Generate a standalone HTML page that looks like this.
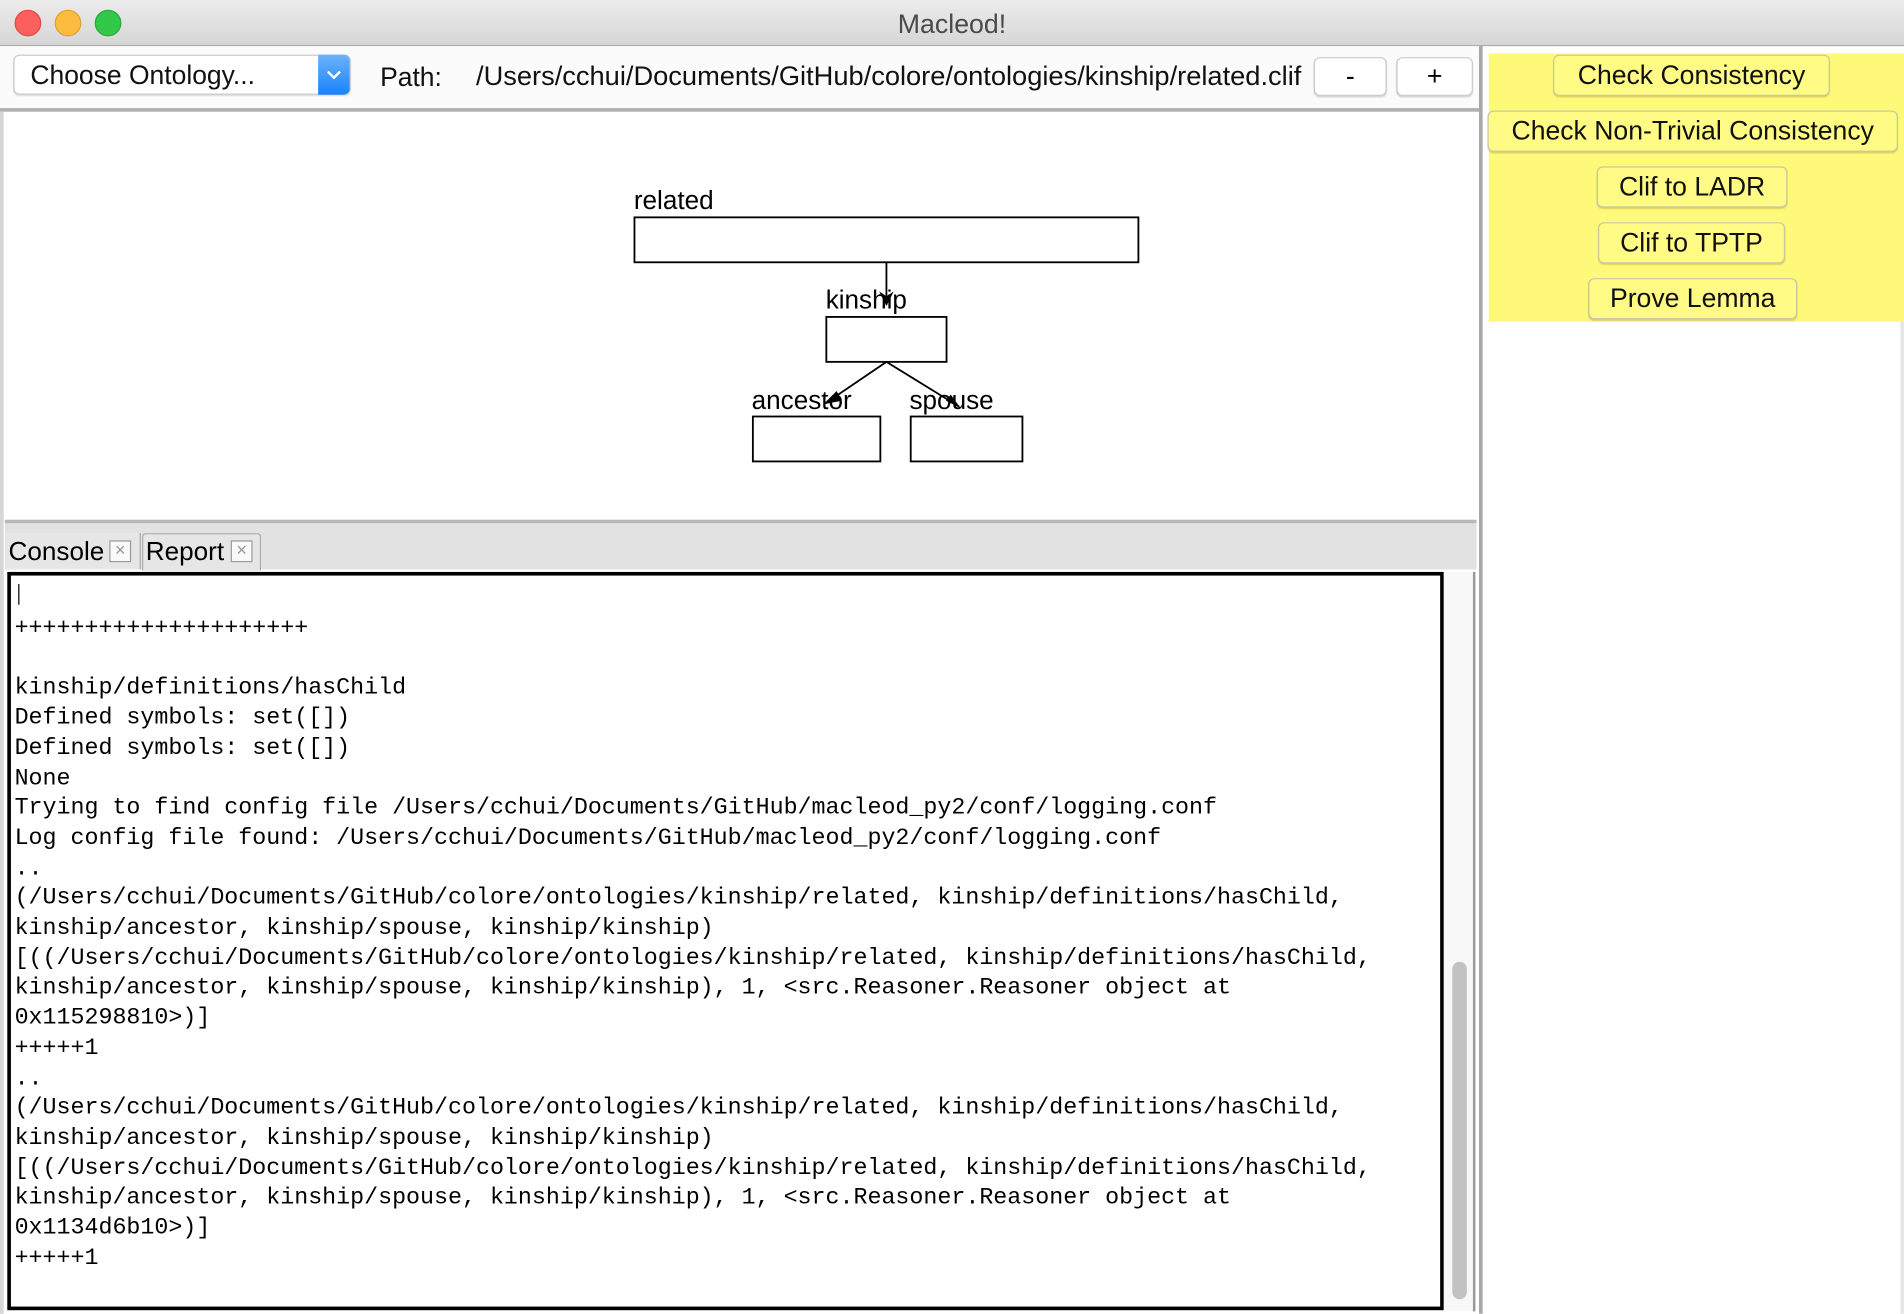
<!DOCTYPE html>
<html><head><meta charset="utf-8"><style>
html,body{margin:0;padding:0;width:1904px;height:1314px;overflow:hidden;background:#fff}
#w{position:absolute;left:0;top:0;width:1568px;height:1082px;transform:scale(1.21429);transform-origin:0 0;font-family:"Liberation Sans",sans-serif;background:#fff;overflow:hidden}
.a{position:absolute}
.btn{position:absolute;background:#fffb85;border:1px solid #c8c8a0;border-radius:5px;box-shadow:0 1px 1px rgba(0,0,0,.15);font-size:21.9px;text-align:center;line-height:32px;height:32px;color:#111;white-space:nowrap}
.wb{position:absolute;background:#fff;border:1px solid #ccc;border-radius:5px;box-shadow:0 1px 1px rgba(0,0,0,.15);font-size:22px;text-align:center;line-height:30px;height:30px}
pre{margin:0;font-family:"Liberation Mono",monospace;font-size:19.2px;line-height:24.7px;color:#000}
</style></head><body><div id="w">
<div class="a" style="left:0;top:0;width:1568px;height:37px;background:linear-gradient(#ececec,#d6d6d6);border-bottom:1px solid #aaa"></div>
<div class="a" style="left:12px;top:8px;width:22px;height:22px;border-radius:50%;background:#fc605c;border:1px solid #de4a45;box-sizing:border-box"></div>
<div class="a" style="left:45px;top:8px;width:22px;height:22px;border-radius:50%;background:#fdbc40;border:1px solid #de9f34;box-sizing:border-box"></div>
<div class="a" style="left:78px;top:8px;width:22px;height:22px;border-radius:50%;background:#34c84a;border:1px solid #27aa35;box-sizing:border-box"></div>
<div class="a" style="left:0;top:7px;width:1568px;text-align:center;font-size:22px;color:#4a4a4a">Macleod!</div>
<div class="a" style="left:0;top:38px;width:1218px;height:51px;background:#fbfbfb;border-bottom:3px solid #b0b0b0"></div>
<div class="a" style="left:11px;top:45px;width:276px;height:31px;border:1px solid #ccc;border-radius:5px;background:#fff;box-shadow:0 1px 1px rgba(0,0,0,.12)"></div>
<div class="a" style="left:25px;top:49px;font-size:21.8px;color:#111">Choose Ontology...</div>
<div class="a" style="left:262px;top:45px;width:26px;height:33px;border-radius:0 5px 5px 0;background:linear-gradient(#6cb3fa,#1a82fb)"><svg width="26" height="33"><path d="M8 14l5 5 5-5" stroke="#fff" stroke-width="2" fill="none"/></svg></div>
<div class="a" style="left:313px;top:51px;font-size:21.8px;color:#111">Path:</div>
<div class="a" style="left:392px;top:50px;font-size:22.45px;color:#111;white-space:nowrap">/Users/cchui/Documents/GitHub/colore/ontologies/kinship/related.clif</div>
<div class="wb" style="left:1082px;top:47px;width:58px">-</div>
<div class="wb" style="left:1150px;top:47px;width:61px">+</div>
<div class="a" style="left:1218px;top:38px;width:3px;height:1044px;background:#a8a8a8"></div>
<div class="a" style="left:1226px;top:44px;width:342px;height:221px;background:#fff97a"></div>
<div class="btn" style="left:1279px;top:45px;width:226px">Check Consistency</div>
<div class="btn" style="left:1225px;top:91px;width:336px">Check Non-Trivial Consistency</div>
<div class="btn" style="left:1315px;top:137px;width:155px">Clif to LADR</div>
<div class="btn" style="left:1316px;top:183px;width:152px">Clif to TPTP</div>
<div class="btn" style="left:1308px;top:229px;width:170px">Prove Lemma</div>
<div class="a" style="left:1565px;top:265px;width:3px;height:817px;background:#e6e6e6"></div>
<div class="a" style="left:0;top:92px;width:3px;height:990px;background:#d6d6d6"></div>
<svg class="a" style="left:0;top:90px" width="1218" height="340">
<g font-family="Liberation Sans" font-size="21.5" fill="#000">
<text x="522" y="82">related</text><text x="680" y="164">kinship</text><text x="619" y="247">ancestor</text><text x="749" y="247">spouse</text></g>
<g fill="none" stroke="#000" stroke-width="1.5">
<rect x="522.5" y="89" width="415" height="37"/><rect x="680.5" y="171" width="99" height="37"/><rect x="620" y="253" width="105" height="37"/><rect x="750" y="253" width="92" height="37"/>
<path d="M730 126V161M730 208L680 242M730 208L790 245"/></g>
<path d="M724 150L730 162L736 150L730 154Z M689 232L678 243L693 240Z M779 240L791 246L783 235Z" fill="#000"/>
</svg>
<div class="a" style="left:4px;top:428px;width:1212px;height:3px;background:#b8b8b8"></div>
<div class="a" style="left:4px;top:431px;width:1212px;height:38px;background:#e2e2e2"></div>
<div class="a" style="left:5px;top:439px;width:110px;height:30px;background:#e6e6e6;border-right:1px solid #aaa"></div>
<div class="a" style="left:117px;top:439px;width:96px;height:30px;background:#e6e6e6;border:1px solid #aaa;border-bottom:none;border-radius:3px 3px 0 0"></div>
<div class="a" style="left:7px;top:442px;font-size:21.5px">Console</div>
<div class="a" style="left:90px;top:445px;width:16px;height:16px;border:1px solid #999;background:#fafafa;color:#999;font-size:15px;line-height:16px;text-align:center">×</div>
<div class="a" style="left:120px;top:442px;font-size:21.5px">Report</div>
<div class="a" style="left:190px;top:445px;width:16px;height:16px;border:1px solid #999;background:#fafafa;color:#999;font-size:15px;line-height:16px;text-align:center">×</div>
<div class="a" style="left:6px;top:471px;width:1177px;height:602px;border:3px solid #000;background:#fff"></div>
<div class="a" style="left:1189px;top:471px;width:24px;height:609px;background:#f8f8f8;border-right:2px solid #999"></div>
<div class="a" style="left:1196px;top:792px;width:12px;height:278px;border-radius:6px;background:#c2c2c2"></div>
<div class="a" style="left:15px;top:481px;width:1px;height:17px;background:#000"></div>
<pre class="a" style="left:12px;top:505px">+++++++++++++++++++++

kinship/definitions/hasChild
Defined symbols: set([])
Defined symbols: set([])
None
Trying to find config file /Users/cchui/Documents/GitHub/macleod_py2/conf/logging.conf
Log config file found: /Users/cchui/Documents/GitHub/macleod_py2/conf/logging.conf
..
(/Users/cchui/Documents/GitHub/colore/ontologies/kinship/related, kinship/definitions/hasChild,
kinship/ancestor, kinship/spouse, kinship/kinship)
[((/Users/cchui/Documents/GitHub/colore/ontologies/kinship/related, kinship/definitions/hasChild,
kinship/ancestor, kinship/spouse, kinship/kinship), 1, &lt;src.Reasoner.Reasoner object at
0x115298810&gt;)]
+++++1
..
(/Users/cchui/Documents/GitHub/colore/ontologies/kinship/related, kinship/definitions/hasChild,
kinship/ancestor, kinship/spouse, kinship/kinship)
[((/Users/cchui/Documents/GitHub/colore/ontologies/kinship/related, kinship/definitions/hasChild,
kinship/ancestor, kinship/spouse, kinship/kinship), 1, &lt;src.Reasoner.Reasoner object at
0x1134d6b10&gt;)]
+++++1</pre>
</div></body></html>
